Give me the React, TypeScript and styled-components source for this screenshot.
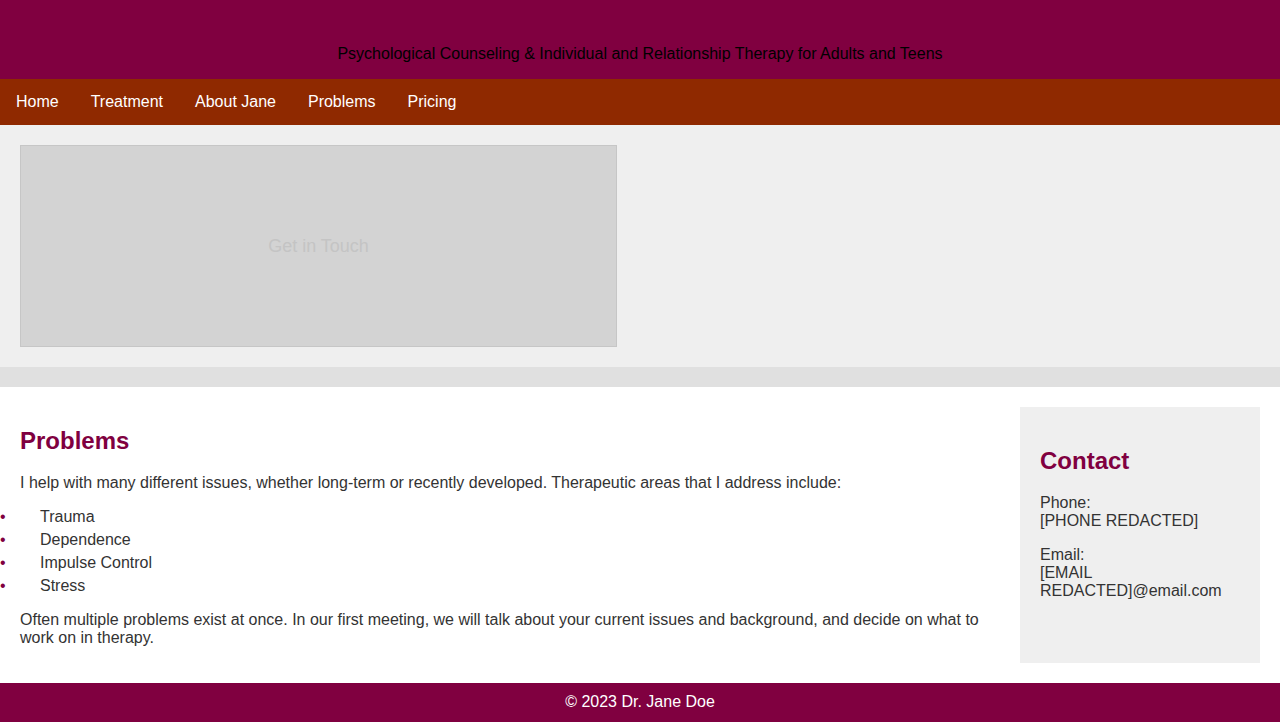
import React from "react";
import styled, { createGlobalStyle } from "styled-components";

const Global = createGlobalStyle`
  html, body { margin: 0; padding: 0; }
  body {
    font-family: "Liberation Sans", Arial, sans-serif;
    font-size: 16px;
    line-height: 18px;
    color: #333;
    background: #ffffff;
  }
  * { box-sizing: border-box; }
`;

const Header = styled.header`
  background: #800040;
  padding: 45px 20px 16px;
  text-align: center;
`;

const Tagline = styled.p`
  margin: 0;
  color: #000;
  font-size: 16px;
  line-height: 18px;
`;

const Nav = styled.nav`
  background: #8f2900;
  display: flex;
`;

const NavLink = styled.a`
  color: #fff;
  text-decoration: none;
  padding: 14px 16px;
  line-height: 18px;
  font-size: 16px;
`;

const Hero = styled.section`
  background: #efefef;
  padding: 20px;
`;

const Placeholder = styled.div`
  width: 597px;
  height: 202px;
  background: #d3d3d3;
  border: 1px solid #c6c6c6;
  display: flex;
  align-items: center;
  justify-content: center;
  color: #c4c4c4;
  font-size: 18px;
`;

const Band = styled.div`
  height: 20px;
  background: #e0e0e0;
`;

const Main = styled.main`
  display: flex;
  gap: 20px;
  padding: 20px;
  align-items: stretch;
`;

const Content = styled.div`
  flex: 1;
`;

const Sidebar = styled.aside`
  width: 240px;
  flex: 0 0 240px;
  background: #efefef;
  padding: 20px;
`;

const Title = styled.h2`
  color: #800040;
  font-size: 24px;
  font-weight: bold;
  margin: 19.92px 0;
  line-height: 27px;
`;

const Para = styled.p`
  margin: 16px 0;
  line-height: 18px;
`;

const List = styled.ul`
  list-style: none;
  margin: 16px 0;
  padding: 0;
`;

const Item = styled.li`
  position: relative;
  padding-left: 20px;
  line-height: 18px;
  margin-bottom: 5px;
  &::before {
    content: "•";
    position: absolute;
    left: -20px;
    top: 0;
    color: #800040;
  }
`;

const Footer = styled.footer`
  background: #800040;
  color: #fff;
  text-align: center;
  padding: 10px 10px 11px;
  line-height: 18px;
`;

export default function App() {
  const problems = ["Trauma", "Dependence", "Impulse Control", "Stress"];
  return (
    <>
      <Global />
      <Header>
        <Tagline>Psychological Counseling &amp; Individual and Relationship Therapy for Adults and Teens</Tagline>
      </Header>
      <Nav>
        <NavLink href="#">Home</NavLink>
        <NavLink href="#">Treatment</NavLink>
        <NavLink href="#">About Jane</NavLink>
        <NavLink href="#">Problems</NavLink>
        <NavLink href="#">Pricing</NavLink>
      </Nav>
      <Hero>
        <Placeholder>Get in Touch</Placeholder>
      </Hero>
      <Band />
      <Main>
        <Content>
          <Title>Problems</Title>
          <Para>
            I help with many different issues, whether long-term or recently developed. Therapeutic areas that I address include:
          </Para>
          <List>
            {problems.map((p) => (
              <Item key={p}>{p}</Item>
            ))}
          </List>
          <Para>
            Often multiple problems exist at once. In our first meeting, we will talk about your current issues and background, and decide on what to work on in therapy.
          </Para>
        </Content>
        <Sidebar>
          <Title>Contact</Title>
          <Para>
            Phone:
            <br />
            [PHONE REDACTED]
          </Para>
          <Para>
            Email:
            <br />
            [EMAIL REDACTED]@email.com
          </Para>
        </Sidebar>
      </Main>
      <Footer>© 2023 Dr. Jane Doe</Footer>
    </>
  );
}
